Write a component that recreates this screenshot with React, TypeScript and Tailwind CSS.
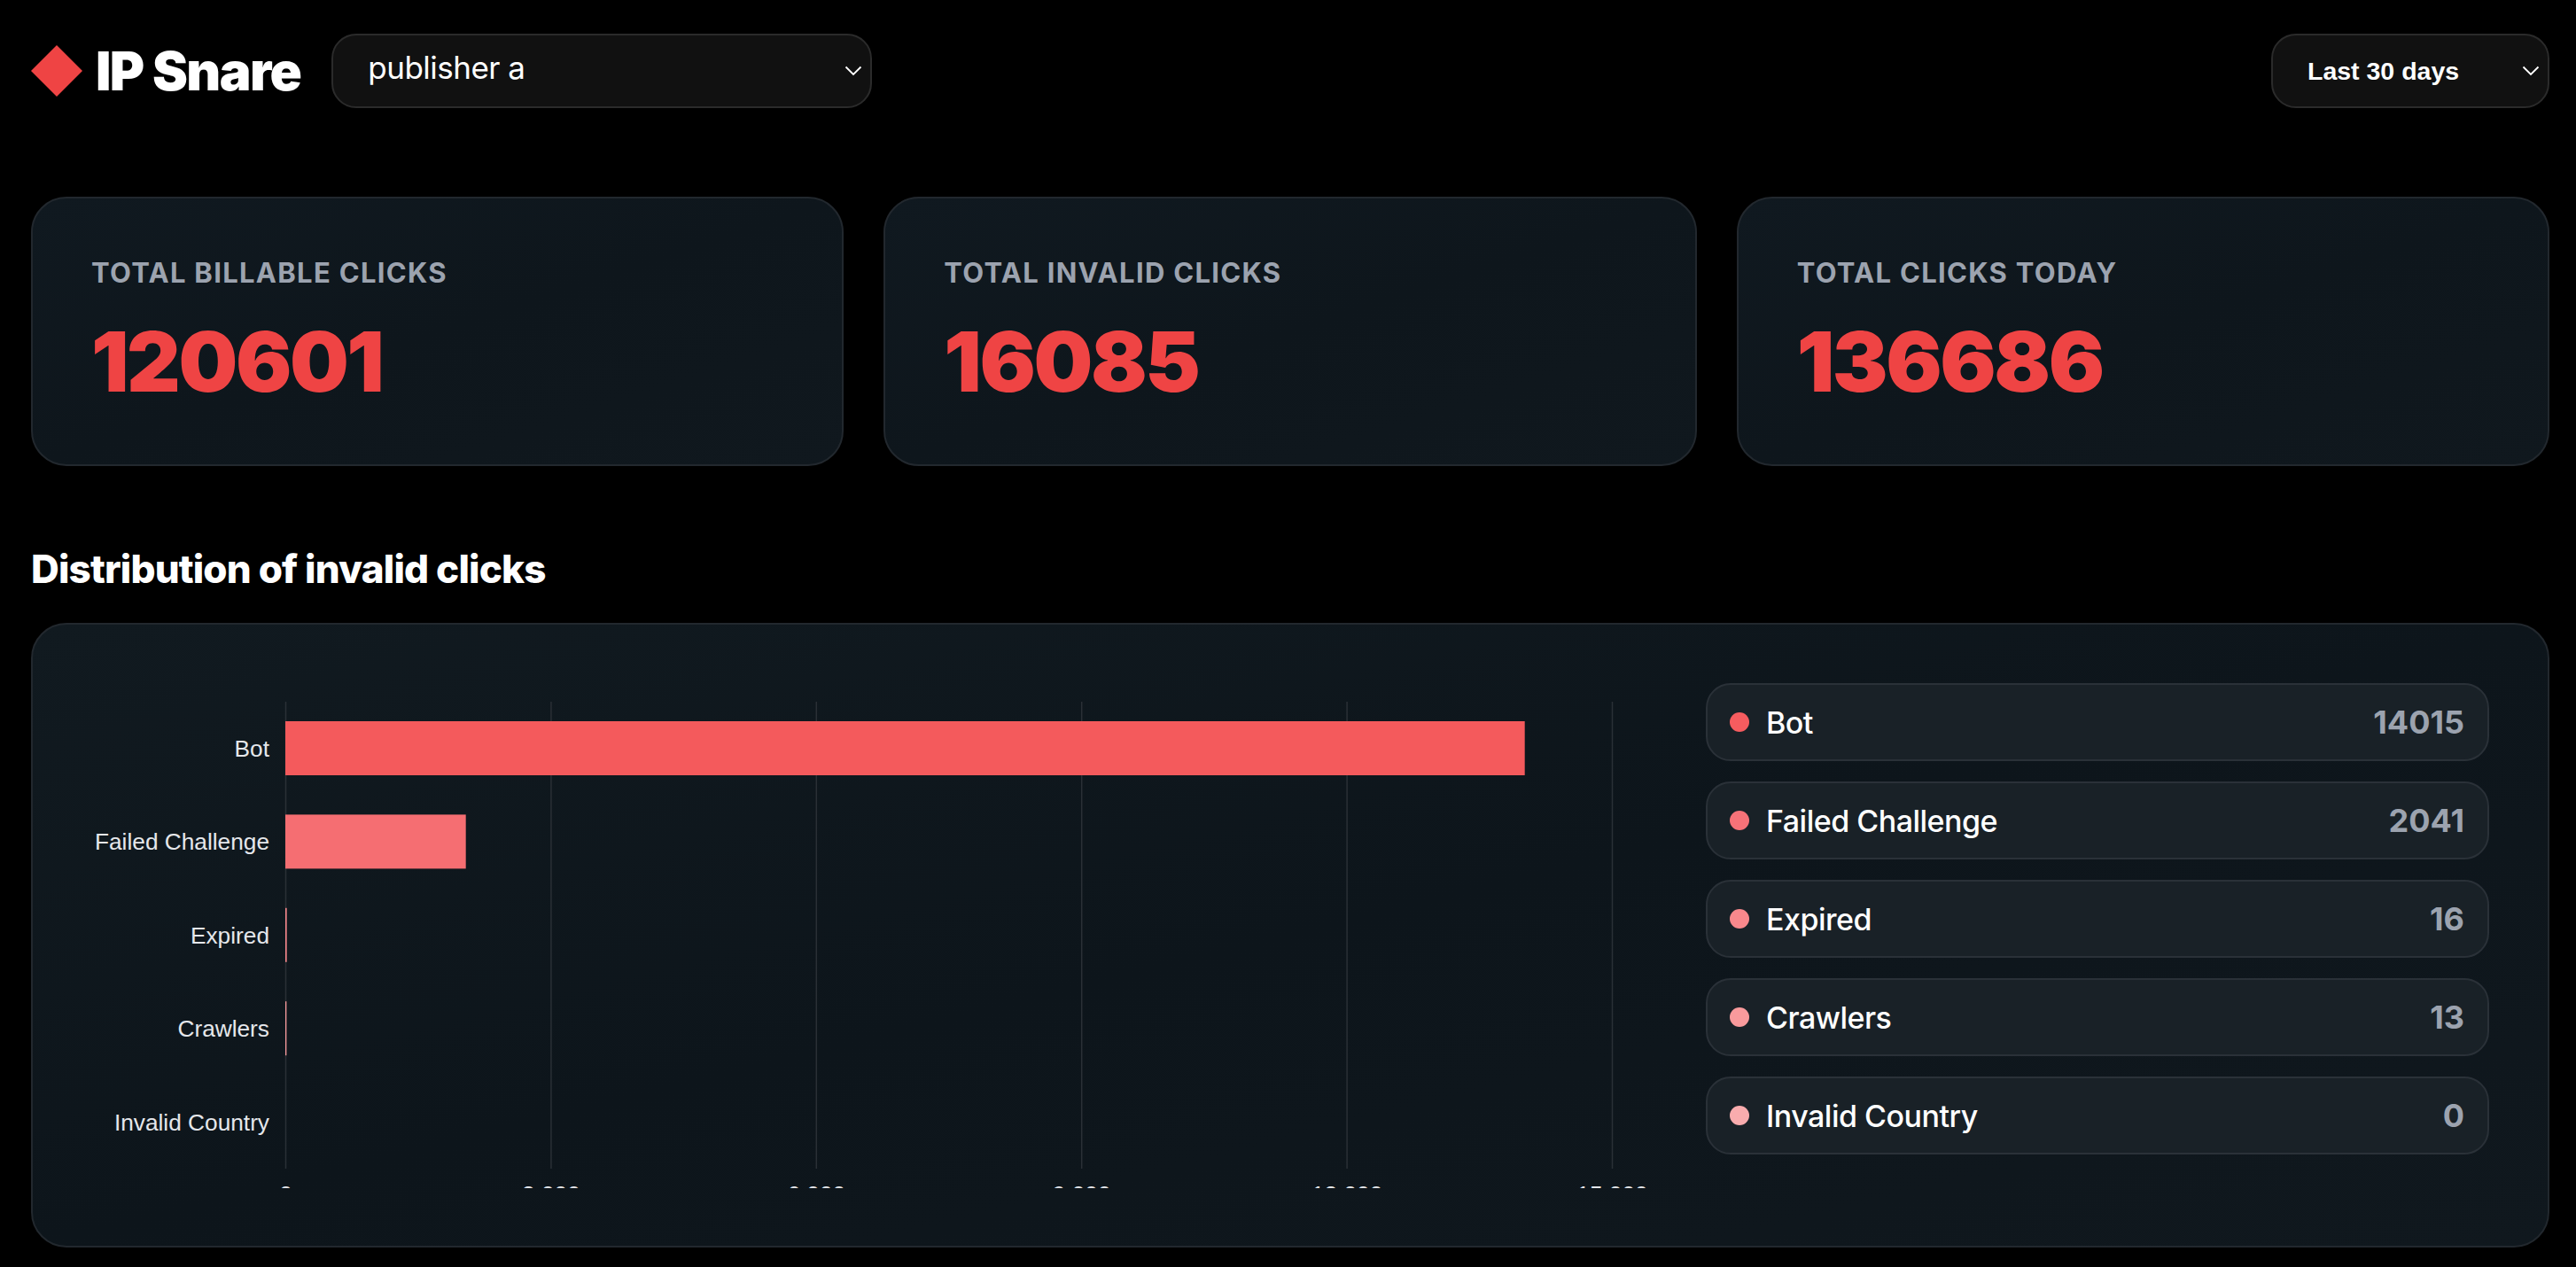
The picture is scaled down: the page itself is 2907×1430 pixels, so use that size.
import React from "react";

const stats = [
  { label: "TOTAL BILLABLE CLICKS", value: "120601" },
  { label: "TOTAL INVALID CLICKS", value: "16085" },
  { label: "TOTAL CLICKS TODAY", value: "136686" },
];

const rows = [
  { name: "Bot", value: 14015, bar: "#f45a5c", dot: "#f65c5f" },
  { name: "Failed Challenge", value: 2041, bar: "#f56e72", dot: "#f77278" },
  { name: "Expired", value: 16, bar: "#f8888c", dot: "#f9888c" },
  { name: "Crawlers", value: 13, bar: "#f99a9c", dot: "#f99a9c" },
  { name: "Invalid Country", value: 0, bar: "#f9acae", dot: "#f9acae" },
];

const ticks = ["0", "3,000", "6,000", "9,000", "12,000", "15,000"];
const AXIS_X = 218.5;
const STEP = 299.4;
const BAND = 105.4;
const TOP = 21;

function Chevron() {
  return (
    <svg width="20" height="12" viewBox="0 0 20 12" fill="none" className="shrink-0">
      <path d="M1.5 1.5 L10 10 L18.5 1.5" stroke="#ffffff" strokeWidth="1.8" />
    </svg>
  );
}

function Chart() {
  return (
    <svg width="1760" height="570" viewBox="0 0 1760 570" className="shrink-0 font-['Liberation_Sans',Arial,sans-serif]">
      {ticks.map((t, i) => (
        <line key={t} x1={AXIS_X + i * STEP} x2={AXIS_X + i * STEP} y1={TOP} y2={TOP + 527} stroke="#2a3036" strokeWidth="1.5" />
      ))}
      {rows.map((r, i) => (
        <g key={r.name}>
          <rect x={AXIS_X - 0.5} y={TOP + i * BAND + 22} width={(r.value / 3000) * STEP} height="61" fill={r.bar} />
          <text x="200" y={TOP + i * BAND + 62} textAnchor="end" fontSize="26.25" fill="#e5e7eb">
            {r.name}
          </text>
        </g>
      ))}
      {ticks.map((t, i) => (
        <text key={t} x={AXIS_X + i * STEP} y="585.5" textAnchor="middle" fontSize="26.25" fill="#e5e7eb">
          {t}
        </text>
      ))}
    </svg>
  );
}

export default function App() {
  return (
    <div className="min-h-screen bg-black pl-[35px] pr-[30px] pt-[38px] pb-[22px] font-['Inter',sans-serif] text-white">
      <header className="flex items-center justify-between">
        <div className="flex items-center">
          <svg width="58" height="58" viewBox="0 0 58 58" className="shrink-0">
            <polygon points="29,0 58,29 29,58 0,29" fill="#ef4444" />
          </svg>
          <span className="ml-[15px] text-[60px] leading-none font-black tracking-[-1.6px]">IP Snare</span>
          <div className="ml-[35px] flex h-[84px] w-[610px] items-center justify-between rounded-[28px] border-2 border-[#2b2b2b] bg-[#111111] pl-[39px] pr-[9px]">
            <span className="-mt-[7px] text-[35px] tracking-[-0.5px]">publisher a</span>
            <Chevron />
          </div>
        </div>
        <div className="flex h-[84px] w-[314px] items-center justify-between rounded-[28px] border-2 border-[#2b2b2b] bg-[#111111] pl-[39px] pr-[9px] font-['Liberation_Sans',Arial,sans-serif]">
          <span className="text-[28.5px] font-bold">Last 30 days</span>
          <Chevron />
        </div>
      </header>

      <section className="mt-[100px] grid grid-cols-3 gap-[45px]">
        {stats.map((s) => (
          <div key={s.label} className="h-[304px] rounded-[40px] border-2 border-[#22282e] bg-gradient-to-br from-[#101920] via-[#0e161c] to-[#10181e] pl-[66px] pt-[66px]">
            <div className="text-[31px] leading-[36px] font-bold tracking-[1.3px] text-[#9ca3af]">{s.label}</div>
            <div className="mt-[27px] text-[94px] leading-[110px] font-black tracking-[-2.4px] text-[#ef4444]">{s.value}</div>
          </div>
        ))}
      </section>

      <h2 className="mt-[89px] text-[44px] leading-[54px] font-extrabold tracking-[-0.83px]">Distribution of invalid clicks</h2>

      <section className="mt-[34px] flex h-[705px] justify-between rounded-[40px] border-2 border-[#22282e] bg-gradient-to-br from-[#111a20] via-[#0d151b] to-[#10181e] pl-[67px] pr-[66px] pt-[66px]">
        <Chart />
        <ul className="flex w-[884px] flex-col gap-[23px]">
          {rows.map((r) => (
            <li key={r.name} className="flex h-[88px] items-center rounded-[28px] border-2 border-[#2a3138] bg-[#192127] pl-[25px] pr-[26px]">
              <span className="h-[22px] w-[22px] rounded-full" style={{ backgroundColor: r.dot }} />
              <span className="ml-[19px] text-[34px] font-medium tracking-[-0.5px]">{r.name}</span>
              <span className="ml-auto text-[36px] font-bold text-[#9ca3af]">{r.value}</span>
            </li>
          ))}
        </ul>
      </section>
    </div>
  );
}
